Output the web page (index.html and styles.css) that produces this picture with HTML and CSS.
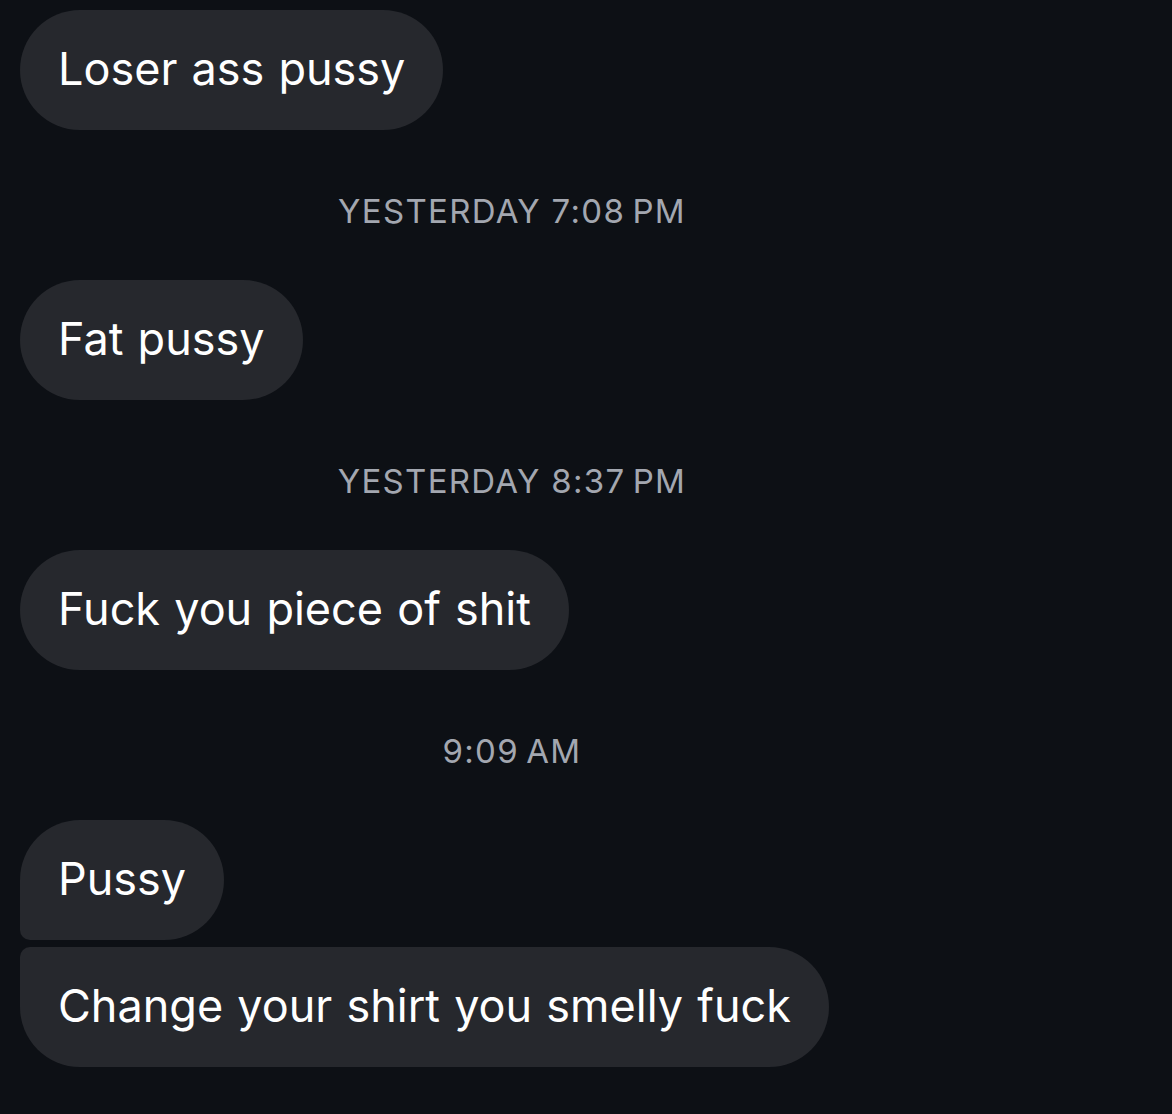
FILE: index.html
```html
<!DOCTYPE html>
<html>
<head>
<meta charset="utf-8">
<link rel="stylesheet" href="styles.css">
</head>
<body>
<div class="thread">
  <div class="bubble">Loser ass pussy</div>
  <div class="stamp">YESTERDAY 7:08&#8201;PM</div>
  <div class="bubble">Fat pussy</div>
  <div class="stamp">YESTERDAY 8:37&#8201;PM</div>
  <div class="bubble">Fuck you piece of shit</div>
  <div class="stamp">9:09&#8201;AM</div>
  <div class="group">
    <div class="bubble first">Pussy</div>
    <div class="bubble last">Change your shirt you smelly fuck</div>
  </div>
</div>
</body>
</html>
```
FILE: styles.css
```css
html, body {
  margin: 0;
  padding: 0;
  background: #0d1015;
  height: 100%;
}
.thread {
  display: flex;
  flex-direction: column;
  align-items: flex-start;
  padding: 10px 20px;
  font-family: Inter, "Liberation Sans", sans-serif;
}
.bubble {
  box-sizing: border-box;
  height: 120px;
  display: flex;
  align-items: center;
  padding: 0 38px 4px 38px;
  background: #26282d;
  color: #ffffff;
  border-radius: 60px;
  font-size: 45px;
  word-spacing: 1.5px;
  white-space: nowrap;
}
.stamp {
  width: 984px;
  text-align: center;
  color: #a3a7b0;
  font-size: 33px;
  letter-spacing: 1.3px;
  line-height: 40px;
  margin: 61px 0 49px 0;
}
.group {
  display: flex;
  flex-direction: column;
  align-items: flex-start;
  gap: 7px;
}
.bubble.first {
  border-bottom-left-radius: 10px;
}
.bubble.last {
  border-top-left-radius: 10px;
}
```
